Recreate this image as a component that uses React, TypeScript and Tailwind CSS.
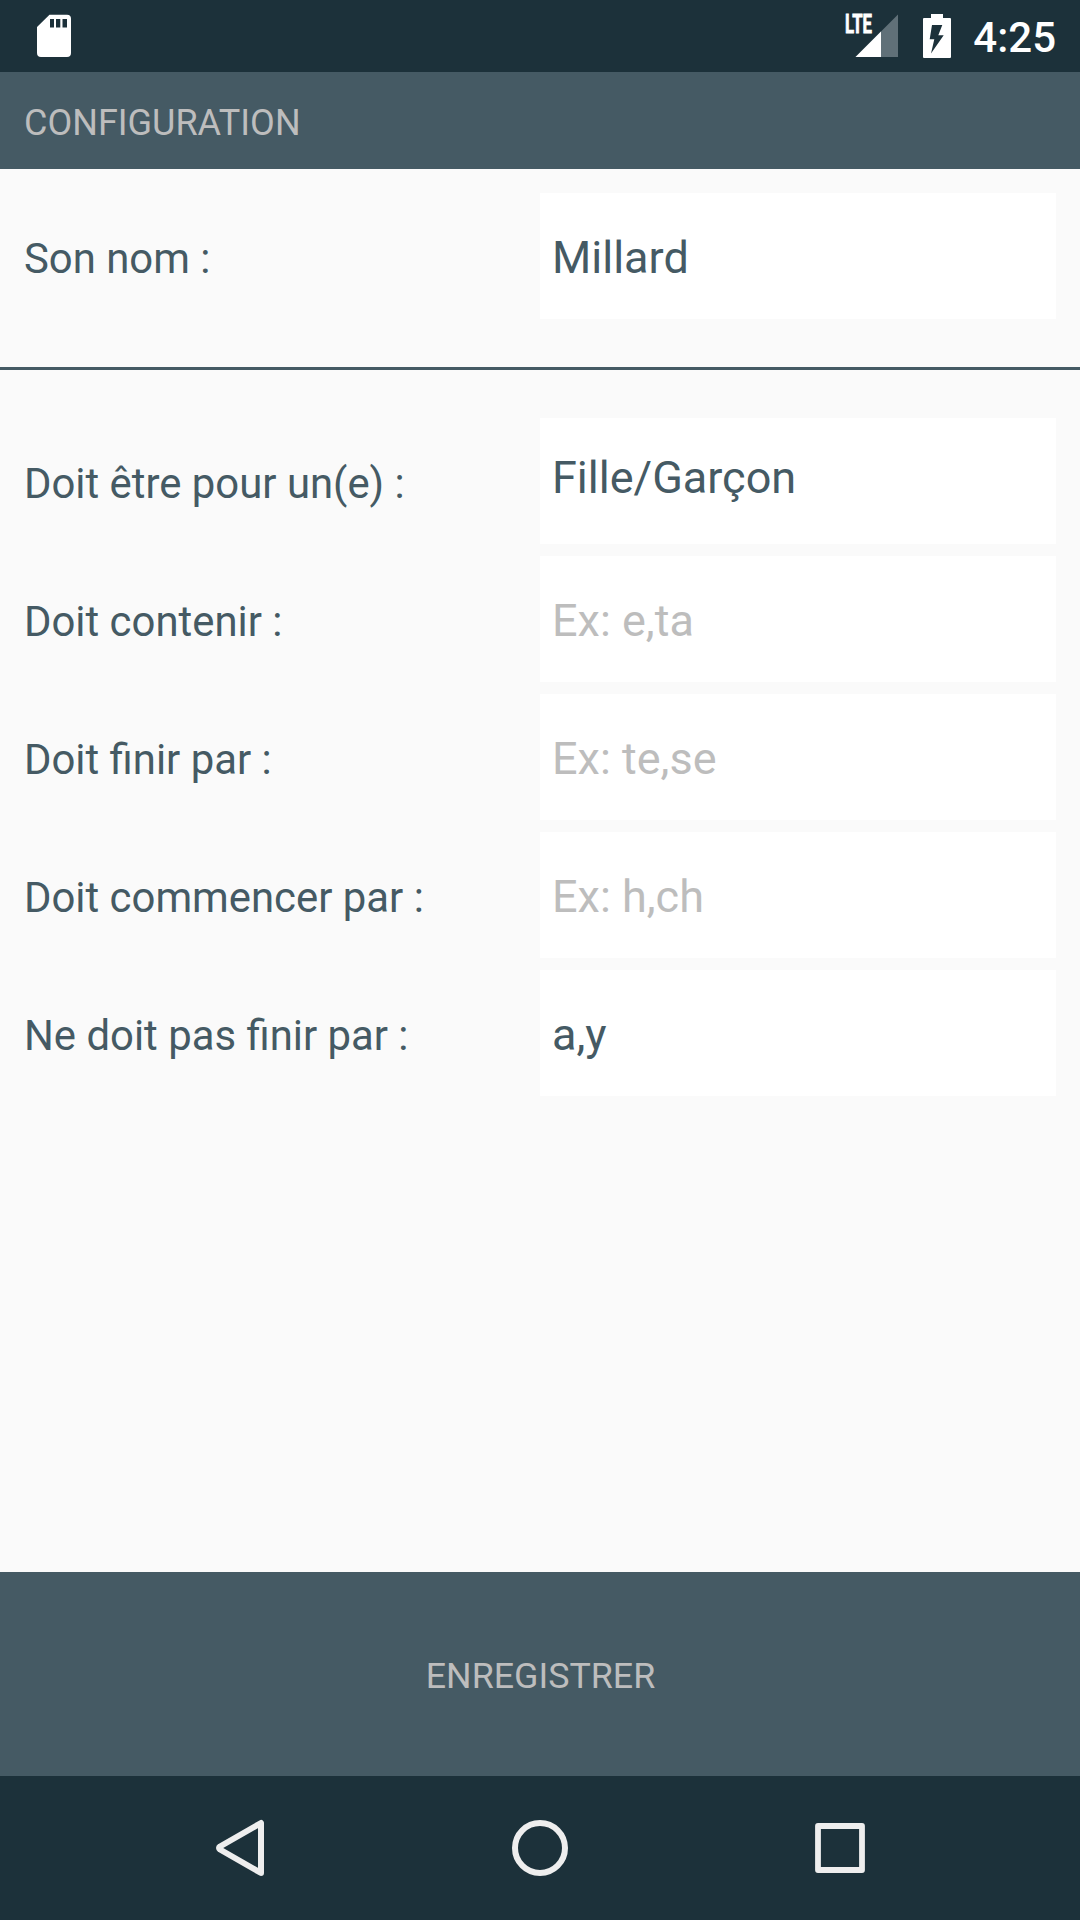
import React, { useState } from 'react';

interface Criterion {
  id: string;
  label: string;
  value: string;
  placeholder?: string;
}

const CRITERIA: Criterion[] = [
  { id: 'gender', label: 'Doit être pour un(e) :', value: 'Fille/Garçon' },
  { id: 'contains', label: 'Doit contenir :', value: '', placeholder: 'Ex: e,ta' },
  { id: 'endsWith', label: 'Doit finir par :', value: '', placeholder: 'Ex: te,se' },
  { id: 'startsWith', label: 'Doit commencer par :', value: '', placeholder: 'Ex: h,ch' },
  { id: 'notEndsWith', label: 'Ne doit pas finir par :', value: 'a,y' },
];

const StatusBar: React.FC = () => (
  <div className="flex h-[72px] shrink-0 items-center bg-[#1c313a] text-white">
    {/* SD card */}
    <svg className="ml-[36px]" width="36" height="44" viewBox="0 0 36 44" fill="currentColor">
      <path
        fillRule="evenodd"
        d="M13.5 .7H31a4 4 0 0 1 4 4V39a4 4 0 0 1-4 4H5a4 4 0 0 1-4-4V13zM14 5v8.5h4V5zm6 0v8.5h4.3V5zm6.5 0v8.5H31V5z"
      />
    </svg>
    {/* Signal */}
    <svg className="ml-auto overflow-visible" width="54" height="44" viewBox="0 0 54 44">
      <path d="M54 .5V43H11.5z" fill="#607078" />
      <path d="M37 17.5V43H11.5z" fill="#fff" />
      <text
        x="1"
        y="19"
        fill="#fff"
        stroke="#fff"
        strokeWidth="0.8"
        fontFamily="Roboto"
        fontSize="25"
        fontWeight="700"
        textLength="27"
        lengthAdjust="spacingAndGlyphs"
      >
        LTE
      </text>
    </svg>
    {/* Battery */}
    <svg className="ml-[25px]" width="28" height="44" viewBox="0 0 28 44" fill="currentColor">
      <path
        fillRule="evenodd"
        d="M8 0h12v4h7a1 1 0 0 1 1 1v38a1 1 0 0 1-1 1H1a1 1 0 0 1-1-1V5a1 1 0 0 1 1-1h7zM9 11L6.7 25.3h4.6L8 39.5l12.7-18.2h-5.4l4-10.3z"
      />
    </svg>
    <span className="mr-6 w-[105px] pt-[4px] text-right text-[42px] leading-none font-medium">4:25</span>
  </div>
);

const NavigationBar: React.FC = () => (
  <div className="flex h-[144px] shrink-0 items-center justify-between bg-[#1c313a] px-[210px] text-[#eee]">
    <svg width="60" height="60" viewBox="0 0 60 60" fill="none" stroke="currentColor" strokeWidth="6" strokeLinejoin="round">
      <path d="M51 5v50L10 31.5q-2-1.5 0-3z" />
    </svg>
    <svg width="60" height="60" viewBox="0 0 60 60" fill="none" stroke="currentColor" strokeWidth="6">
      <circle cx="30" cy="30" r="25" />
    </svg>
    <svg width="60" height="60" viewBox="0 0 60 60" fill="none" stroke="currentColor" strokeWidth="5.8" strokeLinejoin="round">
      <rect x="8" y="8" width="44" height="44" />
    </svg>
  </div>
);

interface FieldProps {
  label: string;
  children: React.ReactNode;
}

const Field: React.FC<FieldProps> = ({ label, children }) => (
  <label className="flex h-[126px] items-center">
    <span className="w-[516px] pt-[6px] text-[41.87px]">{label}</span>
    {children}
  </label>
);

const App: React.FC = () => {
  const [name, setName] = useState('Millard');
  const [criteria, setCriteria] = useState(CRITERIA);

  const updateCriterion = (id: string, value: string) => {
    setCriteria(criteria.map((c) => (c.id === id ? { ...c, value } : c)));
  };

  return (
    <div className="flex h-[1920px] w-[1080px] flex-col bg-[#fafafa] font-[Roboto,sans-serif] text-[#455a64]">
      <StatusBar />

      {/* Header */}
      <header className="flex h-[97px] shrink-0 items-center bg-[#455a64] px-6 pt-1 text-[36px] text-[#bdbdbd]">
        CONFIGURATION
      </header>

      <main className="flex-1">
        <div className="px-6 pt-6 pb-12">
          <Field label="Son nom :">
            <input
              className="h-full w-[516px] bg-white px-3 pt-[2px] text-[45px] outline-none"
              value={name}
              onChange={(e) => setName(e.target.value)}
            />
          </Field>
        </div>

        <div className="h-[3px] bg-[#455a64]" />

        {/* Criteria */}
        <div className="flex flex-col gap-3 px-6 pt-12">
          {criteria.map((item) => (
            <Field key={item.id} label={item.label}>
              {item.id === 'gender' ? (
                <span className="flex h-full w-[516px] items-center bg-white px-3 pb-[7px] text-[45px]">{item.value}</span>
              ) : (
                <input
                  className="h-full w-[516px] bg-white px-3 pt-[2px] text-[45px] outline-none placeholder:text-[#bdbdbd]"
                  value={item.value}
                  placeholder={item.placeholder}
                  onChange={(e) => updateCriterion(item.id, e.target.value)}
                />
              )}
            </Field>
          ))}
        </div>
      </main>

      <button className="h-[204px] shrink-0 bg-[#455a64] pt-[5px] pl-px text-[35.8px] text-[#bdbdbd]">ENREGISTRER</button>
      <NavigationBar />
    </div>
  );
};

export default App;
